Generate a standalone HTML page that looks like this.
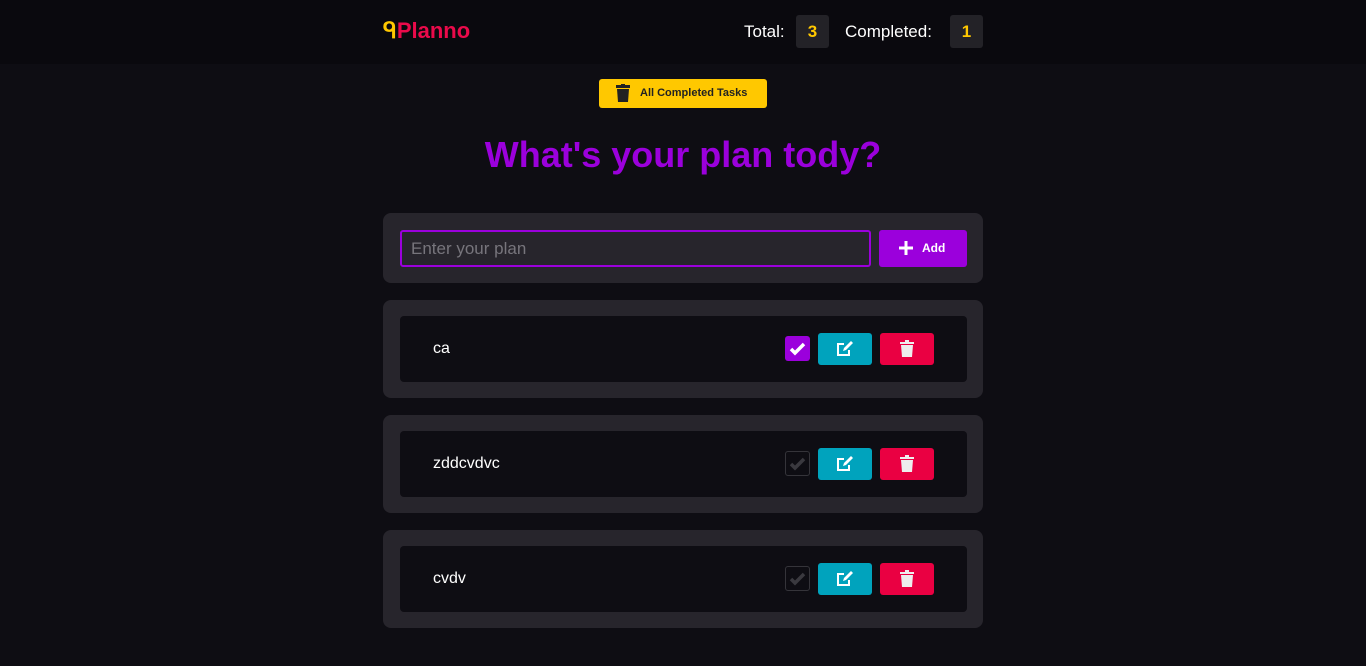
<!DOCTYPE html>
<html><head><style>
*{margin:0;padding:0;box-sizing:border-box}
body{width:1366px;height:666px;background:#0e0d13;font-family:"Liberation Sans",sans-serif;overflow:hidden;position:relative;color:#fff}
.hdr{position:absolute;left:0;top:0;width:1366px;height:64px;background:#0a090e}
.logo{position:absolute;left:383px;top:18px;font-size:22px;font-weight:bold;color:#ea0a4a;letter-spacing:0}
.logo span{color:#ffc800}
.stat{position:absolute;top:15px;height:33px;font-size:17px;line-height:33px;color:#fff}
.badge{position:absolute;top:15px;width:33px;height:33px;background:#232227;border-radius:3px;color:#ffc800;font-weight:bold;font-size:17px;text-align:center;line-height:33px}
.btnall{position:absolute;left:599px;top:79px;width:168px;height:29px;background:#ffc800;border-radius:3px;color:#222;font-size:11px;font-weight:bold;line-height:29px;padding-left:41px}
h1{position:absolute;left:0;width:1366px;top:134px;text-align:center;font-size:36px;color:#9b00dc;font-weight:bold}
.card{position:absolute;left:383px;width:600px;background:#27252c;border-radius:8px}
.inp{position:absolute;left:400px;top:230px;width:471px;height:37px;border:2px solid #9b00dc;border-radius:3px;background:#27252c;color:#77757c;font-size:17px;line-height:33px;padding-left:9px}
.add{position:absolute;left:879px;top:230px;width:88px;height:37px;background:#9b00dc;border-radius:3px;font-size:12px;font-weight:bold;line-height:37px;padding-left:43px}
.inner{position:absolute;left:400px;width:567px;height:66px;background:#0e0d13;border-radius:4px}
.txt{position:absolute;left:433px;font-size:16px}
.cb{position:absolute;left:785px;width:25px;height:25px;border-radius:3px}
.ed{position:absolute;left:818px;width:54px;height:32px;background:#00a3bd;border-radius:3px}
.dl{position:absolute;left:880px;width:54px;height:32px;background:#ea0042;border-radius:3px}
svg{position:absolute}
</style></head><body>
<div class="hdr"></div>
<div class="logo"><span>ᑫ</span>Planno</div>
<div class="stat" style="left:744px">Total:</div>
<div class="badge" style="left:796px">3</div>
<div class="stat" style="left:845px">Completed:</div>
<div class="badge" style="left:950px">1</div>
<div class="btnall">All Completed Tasks</div>
<svg style="left:616px;top:84px" width="14" height="18" viewBox="0 0 14 18"><rect x="0" y="1" width="14" height="3" fill="#222"/><rect x="5" y="0" width="4" height="2" fill="#222"/><path d="M1 5h12l-1 13H2z" fill="#222"/></svg>
<h1>What's your plan tody?</h1>
<div class="card" style="top:213px;height:70px"></div>
<div class="inp">Enter your plan</div>
<div class="add">Add</div>
<svg style="left:899px;top:241px" width="14" height="14"><path d="M7 0v14M0 7h14" stroke="#fff" stroke-width="3"/></svg>

<div class="card" style="top:300px;height:98px"></div>
<div class="inner" style="top:316px"></div>
<div class="txt" style="top:340px">ca</div>
<div class="cb" style="top:336px;background:#9b00dc"></div>
<svg style="left:788px;top:340px" width="19" height="17"><path d="M3 9l4 4 9-9" stroke="#fff" stroke-width="3.5" fill="none"/></svg>
<div class="ed" style="top:333px"></div>
<div class="dl" style="top:333px"></div>

<div class="card" style="top:415px;height:98px"></div>
<div class="inner" style="top:431px"></div>
<div class="txt" style="top:455px">zddcvdvc</div>
<div class="cb" style="top:451px;border:1px solid #35343a"></div>
<svg style="left:788px;top:455px" width="19" height="17"><path d="M3 9l4 4 9-9" stroke="#3a393f" stroke-width="3.5" fill="none"/></svg>
<div class="ed" style="top:448px"></div>
<div class="dl" style="top:448px"></div>

<div class="card" style="top:530px;height:98px"></div>
<div class="inner" style="top:546px"></div>
<div class="txt" style="top:570px">cvdv</div>
<div class="cb" style="top:566px;border:1px solid #35343a"></div>
<svg style="left:788px;top:570px" width="19" height="17"><path d="M3 9l4 4 9-9" stroke="#3a393f" stroke-width="3.5" fill="none"/></svg>
<div class="ed" style="top:563px"></div>
<div class="dl" style="top:563px"></div>

<svg style="left:836px;top:341px" width="18" height="16" viewBox="0 0 18 16"><path d="M8 3H2v11h11V9" stroke="#fff" stroke-width="2" fill="none"/><path d="M7 10l1-3 7-7 2 2-7 7z" fill="#fff"/></svg>
<svg style="left:836px;top:456px" width="18" height="16" viewBox="0 0 18 16"><path d="M8 3H2v11h11V9" stroke="#fff" stroke-width="2" fill="none"/><path d="M7 10l1-3 7-7 2 2-7 7z" fill="#fff"/></svg>
<svg style="left:836px;top:571px" width="18" height="16" viewBox="0 0 18 16"><path d="M8 3H2v11h11V9" stroke="#fff" stroke-width="2" fill="none"/><path d="M7 10l1-3 7-7 2 2-7 7z" fill="#fff"/></svg>
<svg style="left:900px;top:340px" width="14" height="18" viewBox="0 0 14 18"><rect x="0" y="2" width="14" height="2" fill="#eee"/><rect x="5" y="0" width="4" height="2" fill="#eee"/><path d="M1 5h12l-1 12H2z" fill="#eee"/></svg>
<svg style="left:900px;top:455px" width="14" height="18" viewBox="0 0 14 18"><rect x="0" y="2" width="14" height="2" fill="#eee"/><rect x="5" y="0" width="4" height="2" fill="#eee"/><path d="M1 5h12l-1 12H2z" fill="#eee"/></svg>
<svg style="left:900px;top:570px" width="14" height="18" viewBox="0 0 14 18"><rect x="0" y="2" width="14" height="2" fill="#eee"/><rect x="5" y="0" width="4" height="2" fill="#eee"/><path d="M1 5h12l-1 12H2z" fill="#eee"/></svg>
</body></html>
